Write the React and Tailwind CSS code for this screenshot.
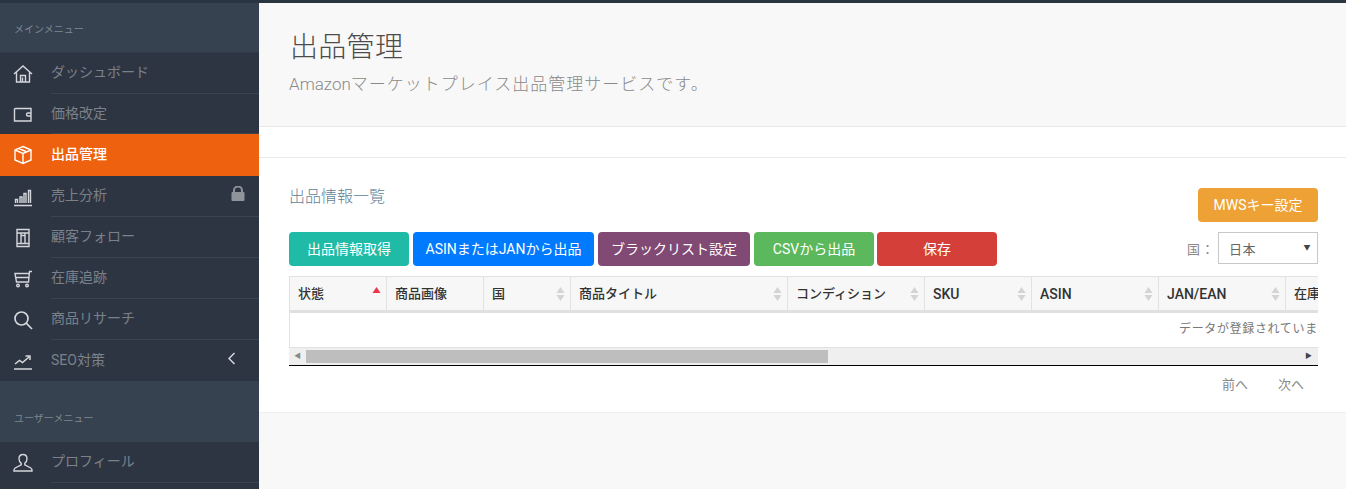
import React from 'react';

const Ico = ({ children }) => (
  <svg width="20" height="20" viewBox="0 0 20 20" fill="none" stroke="currentColor" strokeWidth="1.4" className="shrink-0">
    {children}
  </svg>
);

const icons = {
  home: <Ico><path d="M1 10 10 2l9 8M3.500 8.500V18h13V8.500M7.500 18v-6.500h5V18M9.500 18v-4.500" /></Ico>,
  wallet: <Ico><path d="M18 4.500H2.500A1 1 0 0 0 1.500 5.500v11.500h16.500v-12.500zM18 9h-3a1.500 1.500 0 0 0 0 3h3" /></Ico>,
  box: <Ico><path d="M10 1.500 18 5v10l-8 3.500L2 15V5l8-3.500zM2 5l8 3.500L18 5M10 8.500v10M6 3.500l8 3.500" /></Ico>,
  chart: <Ico><path d="M1 18.500h18M2.500 16v-3.500h2V16M7 16v-6h2v6M11 16V6.500h2V16M15.500 16V3.500h2V16" /></Ico>,
  book: <Ico><path d="M4 1.500h12v17H4zM4 5h12M4 15.500h12M8 5v10.500M12 5v10.500M8 7.500h4" /></Ico>,
  cart: <Ico><path d="M19 2.500h-2.500L15.500 13H3.500L2 4.500h14.500M2.800 8.500h13.200" /><circle cx="5" cy="16.500" r="1.300" /><circle cx="14" cy="16.500" r="1.300" /></Ico>,
  search: <Ico><circle cx="8.500" cy="8.500" r="6.500" strokeWidth="1.700" /><path d="m13.200 13.200 5.800 5.800" strokeWidth="1.700" /></Ico>,
  trend: <Ico><path d="M1 18h18M2 13l4.500-3.500 3 2L16 6M12.500 5H17v4" strokeWidth="1.500" /></Ico>,
  user: <Ico><path d="M10 1.500c2.600 0 4 2 4 4.200 0 2.100-1 3.600-2.200 4.500v1.600l6 3.200c.8.500 1.200 1 1.200 2v1H1v-1c0-1 .4-1.500 1.200-2l6-3.200v-1.600C7 9.300 6 7.800 6 5.700c0-2.200 1.400-4.200 4-4.200z" /></Ico>,
};

const NavRow = ({ icon, label, active, right, h = 'h-[41px]' }) => (
  <div className={`flex items-stretch ${h} pl-[13px] ${active ? 'bg-[#ee620f] text-white' : 'text-[#7a818b]'}`}>
    <div className={`w-[38px] flex items-center ${active ? 'text-white' : 'text-[#d4d7db]'}`}>{icons[icon]}</div>
    <div className={`flex-1 flex items-center justify-between text-sm pb-[2px] ${active ? 'font-medium' : 'border-b border-[#3a4553]'}`}>
      <span>{label}</span>
      {right}
    </div>
  </div>
);

const SectionLabel = ({ children, cls }) => (
  <div className={`bg-[#36424f] px-[14px] text-[10px] text-[#7d8792] flex items-end ${cls}`}>{children}</div>
);

const Lock = () => (
  <svg width="14" height="15" viewBox="0 0 14 15" className="mr-[14px] mb-[3px]">
    <path d="M3 7V4.500a4 4 0 0 1 8 0V7" fill="none" stroke="#8f949b" strokeWidth="2" />
    <rect x="0.500" y="6" width="13" height="9" rx="1" fill="#8f949b" />
  </svg>
);

const Chevron = () => (
  <svg width="9" height="13" viewBox="0 0 9 13" className="mr-[23px] mb-[3px]">
    <path d="M7.500 1 2 6.500 7.500 12" fill="none" stroke="#d4d7db" strokeWidth="1.500" />
  </svg>
);

const Sort = ({ active }) => (
  <svg width="9" height="16" viewBox="0 0 9 16" className="shrink-0">
    <path d="M4.500 1 8.500 7H.5z" fill={active ? '#f0334a' : '#d4d4d4'} />
    {!active && <path d="M4.500 15 8.500 9H.5z" fill="#d4d4d4" />}
  </svg>
);

const columns = [
  ['状態', 'w-[97px] text-[13px]', true],
  ['商品画像', 'w-[97px] text-[13px]', null],
  ['国', 'w-[87px] text-[13px]', false],
  ['商品タイトル', 'w-[217px] text-[13px]', false],
  ['コンディション', 'w-[137px] text-[13px]', false],
  ['SKU', 'w-[107px] text-sm', false],
  ['ASIN', 'w-[127px] text-sm', false],
  ['JAN/EAN', 'w-[127px] text-sm', false],
  ['在庫数', 'w-[97px] text-[13px]', false],
];

const buttons = [
  ['出品情報取得', 'w-[120px] bg-[#1fbba6] mr-1'],
  ['ASINまたはJANから出品', 'w-[181px] bg-[#007aff] mr-1'],
  ['ブラックリスト設定', 'w-[152px] bg-[#804a74] mr-1'],
  ['CSVから出品', 'w-[120px] bg-[#5cb85c] mr-[3px]'],
  ['保存', 'w-[120px] bg-[#d43f3a]'],
];

export default function App() {
  return (
    <div className="h-[489px] w-[1346px] overflow-hidden flex flex-col bg-[#f8f8f8] font-['Roboto','Noto_Sans_CJK_JP',sans-serif]">
      <div className="h-[3px] bg-[#2a3542] shrink-0" />
      <div className="flex flex-1 min-h-0">
        <aside className="w-[259px] shrink-0 bg-[#2e3542] overflow-hidden">
          <SectionLabel cls="h-[50px] pb-[15px] border-b border-[#303b48]">メインメニュー</SectionLabel>
          <NavRow icon="home" label="ダッシュボード" />
          <NavRow icon="wallet" label="価格改定" h="h-[40px]" />
          <NavRow icon="box" label="出品管理" active h="h-[42px]" />
          <NavRow icon="chart" label="売上分析" right={<Lock />} />
          <NavRow icon="book" label="顧客フォロー" />
          <NavRow icon="cart" label="在庫追跡" />
          <NavRow icon="search" label="商品リサーチ" />
          <div className="flex items-stretch h-[41px] pl-[13px] text-[#7a818b]">
            <div className="w-[38px] flex items-center text-[#d4d7db]">{icons.trend}</div>
            <div className="flex-1 flex items-center justify-between text-sm pb-[2px]">
              <span>SEO対策</span>
              <Chevron />
            </div>
          </div>
          <SectionLabel cls="h-[61px] pb-[16px]">ユーザーメニュー</SectionLabel>
          <NavRow icon="user" label="プロフィール" />
        </aside>

        <main className="flex-1 min-w-0 flex flex-col">
          <div className="h-[124px] shrink-0 border-b border-[#e9e9e9] pl-[30px] pt-[25px]">
            <h1 className="text-[28px] leading-[40px] font-light tracking-[0.3px] text-[#4c4c4c] pl-[1px]">出品管理</h1>
            <p className="text-[17px] leading-[22px] mt-[5px] font-light text-[#8a8a8a]">
              Amazon<span className="tracking-[1px]">マーケットプレイス出品管理サービスです。</span>
            </p>
          </div>
          <div className="h-[31px] shrink-0 bg-white border-b border-[#e9e9e9]" />
          <section className="h-[255px] shrink-0 bg-white border-b border-[#eeeeee] pl-[30px] pr-[28px]">
            <div className="flex justify-between h-[74px] pt-[30px]">
              <h2 className="text-base leading-[18px] font-light text-[#5d7f98]">出品情報一覧</h2>
              <button className="w-[120px] h-[34px] rounded bg-[#eea236] text-white text-sm">MWSキー設定</button>
            </div>
            <div className="flex justify-between h-[44px]">
              <div className="flex items-start">
                {buttons.map(([label, cls]) => (
                  <button key={label} className={`h-[34px] rounded text-white text-sm ${cls}`}>{label}</button>
                ))}
              </div>
              <div className="flex items-start">
                <span className="text-[13px] leading-[35px] tracking-[1px] mr-[3px] text-[#8a8a8a]">国：</span>
                <div className="w-[100px] h-[32px] border border-[#c8c8c8] flex items-center justify-between pl-[10px] pr-[6px] text-[13px] tracking-[0.5px] text-[#666666]">
                  <span className="mt-[3px]">日本</span>
                  <span className="text-[7px] text-[#444444]">▼</span>
                </div>
              </div>
            </div>
            <div className="border-b border-black overflow-hidden">
              <div className="flex h-[37px] bg-[#f7f7f7] border border-r-0 border-[#e2e2e2] border-b-[3px] border-b-[#e0e0e0] w-max">
                {columns.map(([label, cls, sort]) => (
                  <div key={label} className={`${cls} shrink-0 flex items-center justify-between pl-[8px] pr-[5px] border-r border-[#e2e2e2] font-medium text-[#333333]`}>
                    <span>{label}</span>
                    {sort !== null && <Sort active={sort} />}
                  </div>
                ))}
              </div>
              <div className="h-[35px] border-l border-b border-[#e2e2e2] bg-white flex items-center pl-[889px] pb-[2px] text-xs whitespace-nowrap text-[#777777] tracking-[0.65px]">
                データが登録されていません
              </div>
              <div className="h-[17px] bg-[#efefef] flex items-stretch">
                <div className="w-[17px] flex items-center justify-center text-[7px] text-[#888888]">◀</div>
                <div className="w-[522px] my-[2px] bg-[#bebebe]" />
                <div className="flex-1 flex items-center justify-end pr-[6px] text-[7px] text-[#444444]">▶</div>
              </div>
            </div>
            <div className="flex justify-end gap-[30px] pr-[14px] mt-[9px] text-[13px] text-[#888888]">
              <span>前へ</span>
              <span>次へ</span>
            </div>
          </section>
        </main>
      </div>
    </div>
  );
}
